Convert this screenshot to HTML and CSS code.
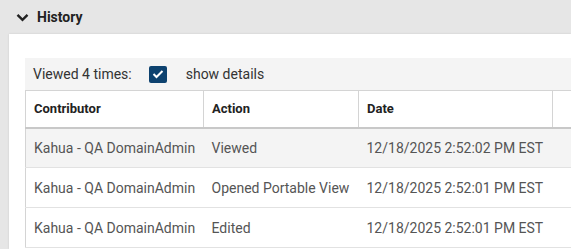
FILE: index.html
```html
<!DOCTYPE html>
<html lang="en">
<head>
    <meta charset="UTF-8">
    <meta name="viewport" content="width=device-width, initial-scale=1.0">
    <title>History</title>
    <link rel="stylesheet" href="styles.css">
</head>
<body>
    <div class="sec_head">
        <svg class="chev" width="13" height="9" viewBox="0 0 13 9"><path d="M1.5 1.8 L6.5 6.8 L11.5 1.8" fill="none" stroke="#222" stroke-width="2.4"/></svg>
        <span>History</span>
    </div>
    <div class="panel">
        <div class="toolbar">
            <span class="count">Viewed 4 times:</span>
            <span class="chk"><svg width="12" height="10" viewBox="0 0 12 10"><path d="M1.5 5 L4.5 8 L10.5 2" fill="none" stroke="#fff" stroke-width="2"/></svg></span>
            <span class="lbl">show details</span>
        </div>
        <table class="hist">
            <thead>
                <tr>
                    <th class="c1">Contributor</th>
                    <th class="c2">Action</th>
                    <th class="c3">Date</th>
                    <th class="c4"></th>
                </tr>
            </thead>
            <tbody>
                <tr class="sel">
                    <td>Kahua - QA DomainAdmin</td>
                    <td>Viewed</td>
                    <td>12/18/2025 2:52:02 PM EST</td>
                    <td></td>
                </tr>
                <tr>
                    <td>Kahua - QA DomainAdmin</td>
                    <td>Opened Portable View</td>
                    <td>12/18/2025 2:52:01 PM EST</td>
                    <td></td>
                </tr>
                <tr>
                    <td>Kahua - QA DomainAdmin</td>
                    <td>Edited</td>
                    <td>12/18/2025 2:52:01 PM EST</td>
                    <td></td>
                </tr>
            </tbody>
        </table>
    </div>
</body>
</html>
```

FILE: styles.css
```css
/*기본*/
* {margin: 0; padding: 0; box-sizing: border-box;}
body {background: #e6e6e6; font-family: Roboto, "Liberation Sans", sans-serif; overflow: hidden; width: 571px; height: 249px;}

/*섹션 제목*/
.sec_head {height: 34px; display: flex; align-items: center; padding-left: 16px; gap: 8px; font-size: 14px; font-weight: bold; color: #222;}
.sec_head span {line-height: 1;}

/*패널 - 오른쪽은 화면 밖으로 이어짐*/
.panel {margin-left: 9px; width: 562px; height: 215px; background: #fff; padding: 24px 0 0 16px; overflow: clip; box-shadow: 0 0 2px rgba(0,0,0,0.12);}

/*툴바*/
.toolbar {width: 600px; height: 32px; background: #f4f4f4; display: flex; align-items: center; padding-left: 8px; font-size: 14px; color: #333;}
.chk {width: 18px; height: 17px; margin-left: 17px; background: #0d426f; border-radius: 2px; display: flex; align-items: center; justify-content: center;}
.lbl {margin-left: 19px;}

/*표*/
.hist {border-collapse: collapse; table-layout: fixed; width: 600px; font-size: 14px;}
.hist th {height: 37px; text-align: left; font-size: 13px; font-weight: bold; color: #222; padding-left: 8px; border-left: 1px solid #d4d4d4; border-top: 1px solid #d4d4d4; border-bottom: 2px solid #c8c8c8; background: #fff;}
.c1 {width: 178px;}
.c2 {width: 155px;}
.c3 {width: 194px;}
.hist td {height: 40px; padding-left: 8px; color: #555; border-bottom: 1px solid #e2e2e2; white-space: nowrap; overflow: hidden;}
.hist td:first-child {border-left: 1px solid #d4d4d4;}
.hist tr.sel td {background: #f4f4f4;}
```
